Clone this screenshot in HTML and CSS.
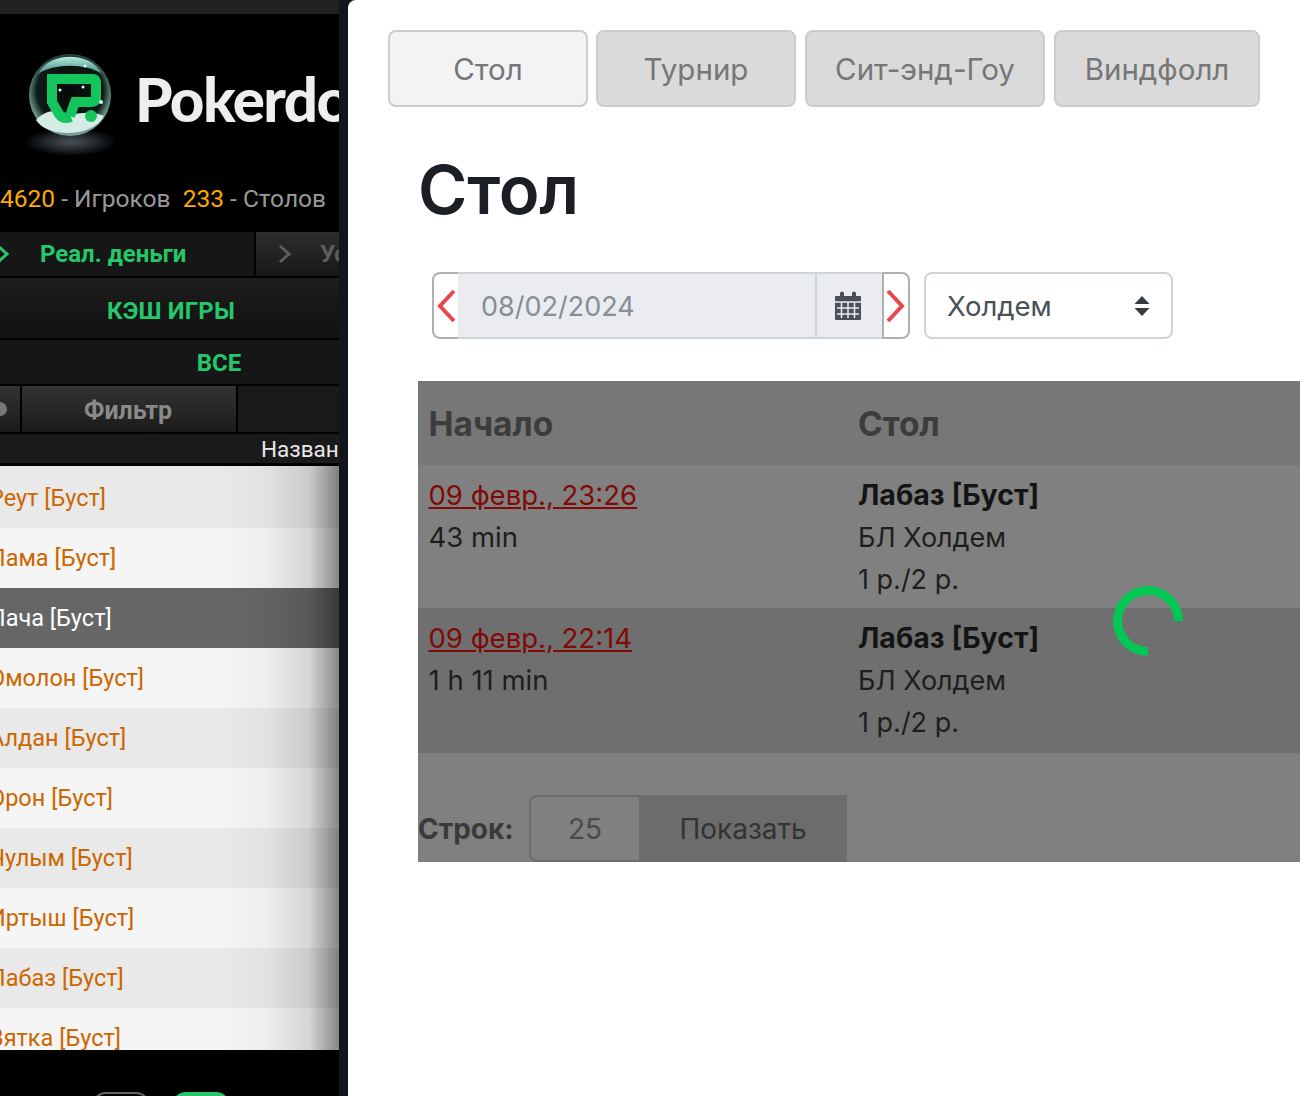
FILE: index.html
```html
<!DOCTYPE html>
<html lang="ru">
<head>
  <meta charset="UTF-8">
  <title>Стол</title>
  <meta name="viewport" content="width=device-width, initial-scale=1.0">
  <link rel="stylesheet" href="styles.css">
</head>
<body>
  <div class="app">
    <aside class="client">
      <div class="client-top"></div>
      <div class="logo-row">
        <svg class="logo-globe" width="100" height="104" viewBox="0 0 100 104">
          <defs>
            <radialGradient id="glass" cx="50%" cy="45%" r="52%">
              <stop offset="0%" stop-color="#050a08"/>
              <stop offset="78%" stop-color="#0e1a17"/>
              <stop offset="100%" stop-color="#6f9f96"/>
            </radialGradient>
            <radialGradient id="base" cx="50%" cy="50%" r="50%">
              <stop offset="0%" stop-color="#4a5058"/>
              <stop offset="55%" stop-color="#23282c"/>
              <stop offset="100%" stop-color="#000"/>
            </radialGradient>
            <linearGradient id="cap" x1="0" y1="0" x2="0" y2="1">
              <stop offset="0%" stop-color="#b5ece0"/>
              <stop offset="100%" stop-color="#3f8a7c"/>
            </linearGradient>
          </defs>
          <ellipse cx="46" cy="88" rx="46" ry="14" fill="url(#base)"/>
          <circle cx="45" cy="41" r="41" fill="url(#glass)"/>
          <path d="M13 20C24 -3 66 -3 77 20C62 9 28 9 13 20Z" fill="url(#cap)"/>
          <path d="M11 66C22 54 34 56 44 60C54 60 66 56 79 62C68 84 22 84 11 66Z" fill="#d5ebe6"/>
          <path d="M27 50V25H68Q71 25 71 29V44Q71 48 66 48H50L45 62" fill="none" stroke="#14c45c" stroke-width="10"/>
          <path d="M27 48L34 60Q38 66 46 63" fill="none" stroke="#14c45c" stroke-width="10"/>
          <circle cx="66" cy="62" r="6" fill="#14c45c"/>
          <circle cx="35" cy="36" r="1.500" fill="#dff"/>
          <circle cx="58" cy="33" r="1.500" fill="#dff"/>
          <circle cx="76" cy="48" r="2" fill="#dff"/>
          <circle cx="60" cy="12" r="1.500" fill="#dff"/>
        </svg>
        <span class="logo-text">Pokerdom</span>
      </div>
      <div class="stats">
        <b>4620</b> - Игроков&nbsp; <b>233</b> - Столов
      </div>
      <div class="money-tabs">
        <div class="money-tab money-active">
          <svg class="chev chev-first" width="14" height="20" viewBox="0 0 14 20"><path d="M2 2L11 10L2 18" fill="none" stroke="#25c76a" stroke-width="3"/></svg>
          <span>Реал. деньги</span>
        </div>
        <div class="money-tab">
          <svg class="chev chev-second" width="14" height="20" viewBox="0 0 14 20"><path d="M2 2L11 10L2 18" fill="none" stroke="#5e5e5e" stroke-width="3"/></svg>
          <span>Условные</span>
        </div>
      </div>
      <div class="bar bar-cash">КЭШ ИГРЫ</div>
      <div class="bar bar-all">ВСЕ</div>
      <div class="filter-row">
        <div class="filter-dot"></div>
        <div class="filter-btn">Фильтр</div>
      </div>
      <div class="list-head">Название</div>
      <ul class="rooms">
        <li>Реут [Буст]</li>
        <li>Лама [Буст]</li>
        <li class="room-active">Лача [Буст]</li>
        <li>Омолон [Буст]</li>
        <li>Алдан [Буст]</li>
        <li>Орон [Буст]</li>
        <li>Чулым [Буст]</li>
        <li>Иртыш [Буст]</li>
        <li>Лабаз [Буст]</li>
        <li>Вятка [Буст]</li>
      </ul>
      <div class="client-foot">
        <span class="foot-btn"></span>
        <span class="foot-btn foot-green"></span>
      </div>
    </aside>

    <main class="stats-page">
      <nav class="tabs">
        <a class="tab tab-active">Стол</a>
        <a class="tab">Турнир</a>
        <a class="tab tab-w240">Сит-энд-Гоу</a>
        <a class="tab tab-w206">Виндфолл</a>
      </nav>

      <h1>Стол</h1>

      <div class="controls">
        <div class="date-group">
          <span class="arrow arrow-left">
            <svg width="20" height="36" viewBox="0 0 20 36"><path d="M17 3L3 18L17 33" fill="none" stroke="#e8474c" stroke-width="4"/></svg>
          </span>
          <span class="date-value">08/02/2024</span>
          <span class="date-icon">
            <svg width="28" height="30" viewBox="0 0 28 30">
              <path fill="#495057" d="M2 5H6V2.500A2 2 0 0 1 10 2.500V5H18V2.500A2 2 0 0 1 22 2.500V5H26Q27 5 27 6V28Q27 29 26 29H2Q1 29 1 28V6Q1 5 2 5Z"/>
              <path stroke="#e9ecef" stroke-width="1.500" d="M1 11H27M3 17H25M3 23H25M7.500 11V27M14 11V27M20.500 11V27"/>
            </svg>
          </span>
          <span class="arrow arrow-right">
            <svg width="20" height="36" viewBox="0 0 20 36"><path d="M3 3L17 18L3 33" fill="none" stroke="#e8474c" stroke-width="4"/></svg>
          </span>
        </div>
        <div class="game-select">
          <span>Холдем</span>
          <svg width="16" height="22" viewBox="0 0 16 22"><path fill="#343a40" d="M8 1L15.500 9H.5ZM8 21L.5 13H15.500Z"/></svg>
        </div>
      </div>

      <div class="results">
        <div class="result-head">
          <div class="col-start">Начало</div>
          <div class="col-table">Стол</div>
        </div>
        <div class="result-row">
          <div class="col-start">
            <a class="game-link">09 февр., 23:26</a>
            <div>43 min</div>
          </div>
          <div class="col-table">
            <b>Лабаз [Буст]</b>
            <div>БЛ Холдем</div>
            <div>1 р./2 р.</div>
          </div>
        </div>
        <div class="result-row row-dark">
          <div class="col-start">
            <a class="game-link">09 февр., 22:14</a>
            <div>1 h 11 min</div>
          </div>
          <div class="col-table">
            <b>Лабаз [Буст]</b>
            <div>БЛ Холдем</div>
            <div>1 р./2 р.</div>
          </div>
        </div>
        <div class="rows-form">
          <b>Строк:</b>
          <span class="rows-input">25</span>
          <span class="rows-btn">Показать</span>
        </div>
        <div class="spinner"></div>
      </div>
    </main>
  </div>
</body>
</html>
```

FILE: styles.css
```css
html, body {
  margin: 0;
  height: 100%;
  overflow: hidden;
  background: #fff;
}
.app {
  display: flex;
  height: 1096px;
  width: 1300px;
  overflow: hidden;
  background: #11151f;
}

/* left: poker client */
.client {
  width: 339px;
  flex: none;
  background: #000;
  margin-right: 9px;
  font-family: Roboto, Arial, sans-serif;
  overflow: hidden;
  display: flex;
  flex-direction: column;
}
.client > * {
  flex: none;
}
.client-top {
  height: 14px;
  background: #202122;
}
.logo-row {
  height: 160px;
  display: flex;
  align-items: flex-start;
  padding: 40px 0 0 25px;
  box-sizing: border-box;
  gap: 10px;
  white-space: nowrap;
}
.logo-globe {
  flex: none;
}
.logo-text {
  font-family: Lato, Arial, sans-serif;
  font-weight: 900;
  font-size: 60px;
  letter-spacing: -1.500px;
  line-height: 1;
  margin-top: 15px;
  color: #eee;
}
.stats {
  height: 58px;
  padding-top: 10px;
  box-sizing: border-box;
  font-size: 24.500px;
  color: #999;
  white-space: nowrap;
  line-height: 30px;
}
.stats b {
  font-weight: 400;
  color: #ffa800;
}
.money-tabs {
  display: flex;
  gap: 2px;
  height: 46px;
  box-sizing: border-box;
  border-bottom: 2px solid #000;
}
.money-tab {
  flex: none;
  width: 254px;
  background: #161616;
  display: flex;
  align-items: center;
  font-weight: 700;
  font-size: 24px;
  color: #5e5e5e;
  white-space: nowrap;
  overflow: hidden;
}
.money-tab + .money-tab {
  width: 83px;
  background: linear-gradient(#2d2d2d, #181818);
}
.money-active {
  color: #25c76a;
}
.chev {
  flex: none;
}
.chev-first {
  margin: 0 30px 0 -4px;
}
.chev-second {
  margin: 0 28px 0 22px;
}
.bar {
  color: #25c76a;
  font-weight: 700;
  font-size: 24px;
  text-align: center;
  border-bottom: 2px solid #000;
}
.bar-cash {
  height: 60px;
  line-height: 67px;
  padding-left: 3px;
  background: linear-gradient(#1d1d1d, #111);
  letter-spacing: 0.2px;
}
.bar-all {
  height: 44px;
  line-height: 46px;
  padding-left: 99px;
  background: #161616;
}
.filter-row {
  display: flex;
  height: 46px;
  border-bottom: 2px solid #000;
  background: #191919;
}
.filter-dot {
  width: 20px;
  flex: none;
  background: linear-gradient(#333, #1b1b1b);
  border-right: 2px solid #000;
  position: relative;
}
.filter-dot::before {
  content: "";
  position: absolute;
  left: -7px;
  top: 16px;
  width: 14px;
  height: 14px;
  border-radius: 50%;
  background: #777;
}
.filter-btn {
  width: 212px;
  padding-right: 2px;
  flex: none;
  background: linear-gradient(#333, #1b1b1b);
  border-right: 2px solid #000;
  color: #8a8a8a;
  font-weight: 700;
  font-size: 25px;
  line-height: 50px;
  text-align: center;
}
.list-head {
  height: 29px;
  background: #1a1a1a;
  border-bottom: 3px solid #000;
  color: #e8e8e8;
  font-size: 22.500px;
  line-height: 30px;
  white-space: nowrap;
  padding-left: 261px;
}
.rooms {
  list-style: none;
  margin: 0;
  padding: 0;
  height: 584px;
  overflow: hidden;
  position: relative;
}
.rooms::after {
  content: "";
  position: absolute;
  top: 0;
  right: 0;
  bottom: 0;
  width: 120px;
  background: linear-gradient(90deg, rgba(0,0,0,0), rgba(0,0,0,0.03) 40%, rgba(0,0,0,0.13) 75%, rgba(0,0,0,0.45));
}
.rooms li {
  height: 60px;
  line-height: 60px;
  background: #e9e9e9;
  color: #cc6600;
  font-size: 23.500px;
  white-space: nowrap;
  text-indent: -11px;
}
.rooms li:first-child {
  height: 62px;
  line-height: 64px;
}
.rooms li:nth-child(even) {
  background: #f5f5f5;
}
.rooms .room-active {
  background: #666;
  color: #fff;
}
.client-foot {
  display: flex;
  gap: 22px;
  padding: 42px 0 0 92px;
}
.foot-btn {
  width: 58px;
  height: 40px;
  border-radius: 14px;
  border: 2px solid #666;
  box-sizing: border-box;
  background: #000;
}
.foot-green {
  background: #25c76a;
  border-color: #25c76a;
}

/* right: statistics page */
.stats-page {
  flex: 1;
  min-width: 0;
  padding: 30px 0 0 40px;
  background: #fff;
  border-top-left-radius: 8px;
  font-family: Inter, Arial, sans-serif;
  color: #212529;
  overflow: hidden;
}
.tabs {
  display: flex;
  gap: 8px;
}
.tab {
  width: 200px;
  flex: none;
  height: 77px;
  box-sizing: border-box;
  background: #dadada;
  border: 2px solid #ccc;
  border-radius: 8px;
  color: #767676;
  font-size: 29.500px;
  line-height: 74px;
  text-align: center;
  white-space: nowrap;
}
.tab-active {
  background: #f3f2f4;
}
.tab-w240 {
  width: 240px;
  margin-left: 1px;
}
.tab-w206 {
  width: 206px;
  margin-left: 1px;
}
h1 {
  margin: 45px 0 0 30px;
  font-size: 67px;
  line-height: 76px;
  font-weight: 600;
  letter-spacing: -0.200px;
  color: #1b1e23;
}
.controls {
  display: flex;
  gap: 14px;
  margin: 44px 0 0 44px;
}
.date-group {
  display: flex;
  width: 478px;
  height: 67px;
}
.date-group > span {
  box-sizing: border-box;
  border: 2px solid #ced4da;
  flex: none;
}
.date-group > .arrow {
  width: 26px;
  display: flex;
  align-items: center;
  justify-content: center;
  background: #fff;
  border-color: #b0b0b0;
}
.date-group > .arrow-left {
  border-right: 0;
  border-radius: 8px 0 0 8px;
  padding: 1px 0 0 2px;
}
.date-group > .arrow-right {
  width: 28px;
  border-radius: 0 8px 8px 0;
  padding: 1px 2px 0 0;
}
.date-group > .date-value {
  width: 357px;
  background: #eaecf0;
  border-width: 2px 0;
  padding-left: 23px;
  font-size: 27px;
  line-height: 66px;
  color: #868e96;
}
.date-group > .date-icon {
  width: 67px;
  display: flex;
  align-items: center;
  justify-content: center;
  padding-right: 4px;
  background: #eaecf0;
  border-width: 2px 0 2px 2px;
}
.game-select {
  width: 249px;
  height: 67px;
  box-sizing: border-box;
  border: 2px solid #ced4da;
  border-radius: 8px;
  display: flex;
  align-items: center;
  justify-content: space-between;
  padding: 0 21px 0 21px;
  font-size: 27.500px;
  color: #495057;
}
.results {
  position: relative;
  margin: 42px 0 0 30px;
  width: 900px;
  background: #808080;
  font-size: 27.500px;
  color: #1c1c1c;
}
.result-head {
  display: flex;
  height: 84px;
  line-height: 86px;
  background: #777;
  font-size: 33.500px;
  font-weight: 700;
  color: #3c3c3c;
}
.col-start {
  width: 440px;
  flex: none;
  padding-left: 10.500px;
  box-sizing: border-box;
}
.col-table div {
  font-size: 27px;
  position: relative;
  top: 1px;
}
.result-row {
  display: flex;
  height: 143px;
  padding-top: 9px;
  box-sizing: border-box;
  line-height: 42px;
  color: #1e1e1e;
}
.result-row b {
  font-size: 28.500px;
  color: #141414;
}
.row-dark {
  height: 145px;
  background: #6f6f6f;
}
.game-link {
  color: #7f0a06;
  text-decoration: underline;
}
.rows-form {
  display: flex;
  align-items: stretch;
  margin-top: 42px;
  height: 67px;
  line-height: 69px;
  font-size: 28px;
}
.rows-form b {
  width: 111px;
  color: #3a3a3a;
}
.rows-input {
  width: 110px;
  box-sizing: border-box;
  border: 2px solid #6c6c6c;
  border-right: 0;
  border-radius: 8px 0 0 8px;
  text-align: center;
  line-height: 65px;
  color: #4a4a4a;
}
.rows-btn {
  width: 208px;
  background: #6c6c6c;
  text-align: center;
  color: #333;
}
.spinner {
  position: absolute;
  left: 695px;
  top: 205px;
  width: 70px;
  height: 70px;
  box-sizing: border-box;
  border: 9px solid #00c853;
  border-right-color: transparent;
  border-radius: 50%;
  transform: rotate(45deg);
}
```
